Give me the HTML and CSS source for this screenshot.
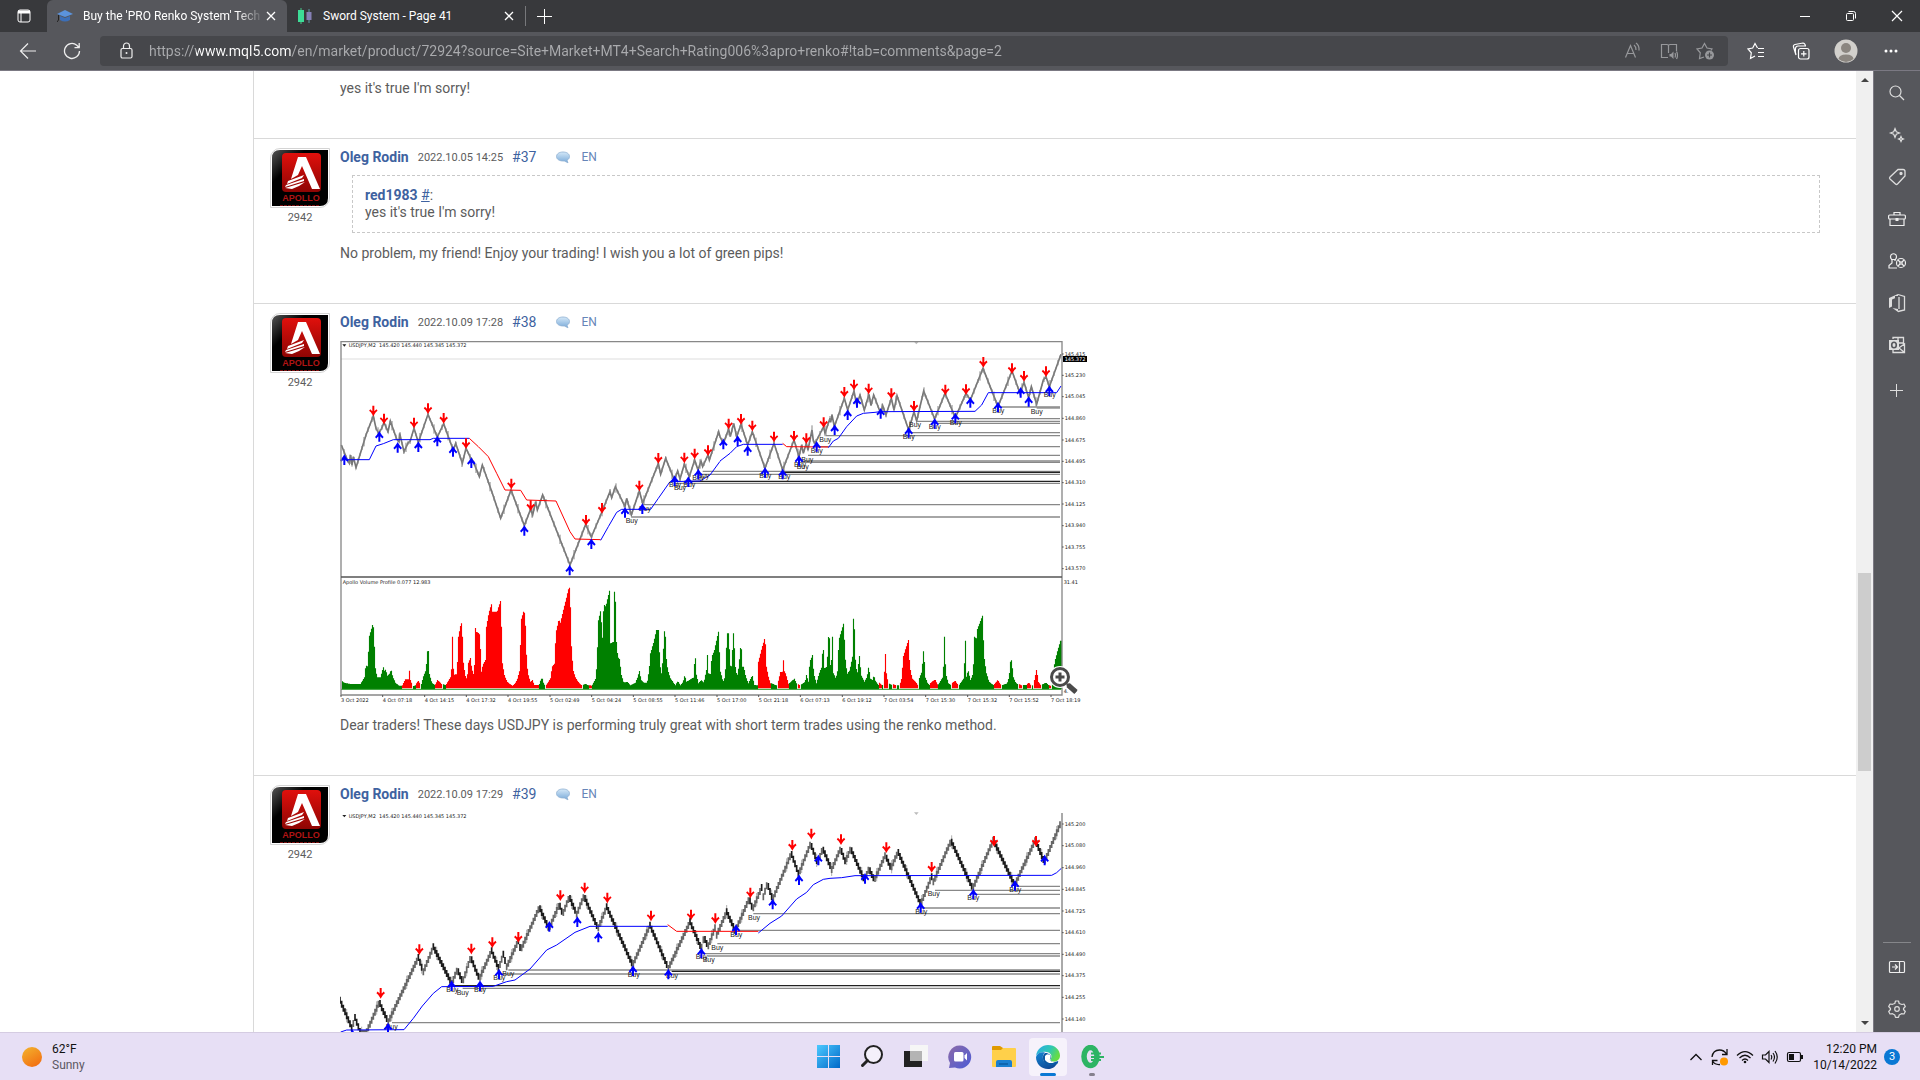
FILE: index.html
```
<!DOCTYPE html>
<html lang="en">

<head>
   <meta charset="UTF-8">
   <meta name="viewport" content="width=device-width, initial-scale=1.0">
   <title>Buy the 'PRO Renko System' Technical Indicator</title>
   <link rel="stylesheet" href="styles.css">
</head>

<body>
   <!-- shared drawings -->
   <svg class="defs" width="0" height="0" aria-hidden="true">
      <defs>
         <linearGradient id="apollo-black" x1="0" y1="0" x2="1" y2="1">
            <stop offset="0" stop-color="#555" />
            <stop offset=".3" stop-color="#000" />
         </linearGradient>
         <linearGradient id="apollo-red" x1="0" y1="0" x2="0" y2="1">
            <stop offset="0" stop-color="#e0100c" />
            <stop offset="1" stop-color="#8e0503" />
         </linearGradient>
         <linearGradient id="bubble-blue" x1="0" y1="0" x2="0" y2="1">
            <stop offset="0" stop-color="#d4e8f8" />
            <stop offset="1" stop-color="#78a9d8" />
         </linearGradient>
         <symbol id="avatar" viewBox="0 0 56 56">
            <path d="M8 0H56V48Q56 56 48 56H0V8Q0 0 8 0Z" fill="url(#apollo-black)" />
            <rect x="10" y="3" width="39" height="39" rx="4" fill="url(#apollo-red)" />
            <path d="M26 7H34L48 39H40L30 16L26 25L19 29Z" fill="#fff" />
            <path d="M16 31L32 25L30 28L15 34ZM14 35L32 29L32 31L13 37ZM13 38L33 32L27 36L20 39Z" fill="#fff" />
            <text x="29" y="51" class="avatar-name">APOLLO</text>
            <path d="M8 55.500H48" stroke="#7a1010" stroke-dasharray="3 1" />
         </symbol>
         <symbol id="bubble" viewBox="0 0 14 14">
            <path d="M7 2C11 2 13.500 4 13.500 6.500C13.500 8.300 12.500 9.500 11 10.200L12 12.800L8.300 11C3.500 11.300 .5 9.300 .5 6.500C.5 4 3 2 7 2Z" fill="url(#bubble-blue)" stroke="#8fb0d2" stroke-width=".8" />
         </symbol>
         <g id="arrow-down">
            <path d="M0-14V9M-11-1Q-5 3 0 12Q5 3 11-1" fill="none" stroke="#f00" stroke-width="6" />
         </g>
         <g id="arrow-up">
            <path d="M0 15V-8M-11 3Q-5-2 0-11Q5-2 11 3" fill="none" stroke="#00f" stroke-width="6" />
         </g>
      </defs>
   </svg>

   <header class="tab-bar">
      <button class="tab-menu" aria-label="Tab actions">
         <svg width="16" height="16" viewBox="0 0 16 16" fill="none" stroke="#fff"><rect x="2" y="2" width="12" height="12" rx="2" /><path d="M2 4H14" stroke-width="3" /><path d="M5 5V14" /></svg>
      </button>
      <div class="tab active">
         <svg class="favicon" width="16" height="16" viewBox="0 0 16 16"><path d="M0 6L8 2L16 6L8 9Z" fill="#5b93dc" /><path d="M3 8V12Q8 15 13 12V8L8 10Z" fill="#3c6fb8" /><path d="M1.500 7V12L0 14" stroke="#222" fill="none" /></svg>
         <span class="tab-title">Buy the 'PRO Renko System' Tech</span>
         <button class="tab-close" aria-label="Close tab"><svg width="10" height="10" viewBox="0 0 10 10" stroke="#fff" stroke-width="1.300"><path d="M1 1L9 9M9 1L1 9" /></svg></button>
      </div>
      <div class="tab">
         <svg class="favicon" width="16" height="16" viewBox="0 0 16 16"><path d="M4 0V16M12 1V15" stroke="#4c8" /><rect x="1" y="2" width="6" height="12" fill="#3ddc97" /><path d="M12 1V15" stroke="#55507c" /><rect x="9.500" y="4" width="5" height="8" fill="#8580b5" /></svg>
         <span class="tab-title">Sword System - Page 41</span>
         <button class="tab-close" aria-label="Close tab"><svg width="10" height="10" viewBox="0 0 10 10" stroke="#fff" stroke-width="1.300"><path d="M1 1L9 9M9 1L1 9" /></svg></button>
      </div>
      <button class="new-tab" aria-label="New tab"><svg width="16" height="16" viewBox="0 0 16 16" stroke="#fff"><path d="M8.500 1V16M1 8.500H16" /></svg></button>
      <div class="window-buttons">
         <button aria-label="Minimize"><svg width="12" height="12" viewBox="0 0 12 12" stroke="#fff"><path d="M1 6.500H11" /></svg></button>
         <button aria-label="Restore"><svg width="12" height="12" viewBox="0 0 12 12" stroke="#fff" fill="none"><rect x="1.500" y="3.500" width="7" height="7" rx="1" /><path d="M3.500 1.500H8.500Q10.500 1.500 10.500 3.500V8.500" /></svg></button>
         <button aria-label="Close"><svg width="12" height="12" viewBox="0 0 12 12" stroke="#fff" stroke-width="1.200"><path d="M1 1L11 11M11 1L1 11" /></svg></button>
      </div>
   </header>

   <nav class="toolbar">
      <button class="nav-btn" aria-label="Back"><svg width="18" height="18" viewBox="0 0 18 18" fill="none" stroke="#eee" stroke-width="1.200"><path d="M17 9H2M9 1.500L1.500 9L9 16.500" /></svg></button>
      <button class="nav-btn" aria-label="Refresh"><svg width="18" height="18" viewBox="0 0 18 18" fill="none" stroke="#eee" stroke-width="1.300"><path d="M16.500 9A7.500 7.500 0 1 1 13.800 3.200L16 5.500M16.200 1V5.700H11.500" /></svg></button>
      <div class="address">
         <svg width="14" height="18" viewBox="0 0 14 18" fill="none" stroke="#eee" stroke-width="1.200"><rect x="2" y="6.500" width="11" height="9.500" rx="1.500" /><path d="M4.500 6.500V4A3 3 0 0 1 10.500 4V6.500" /><circle cx="7.500" cy="11" r="1" fill="#eee" stroke="none" /></svg>
         <input type="text" class="url" aria-label="Address" value="https://www.mql5.com/en/market/product/72924?source=Site+Market+MT4+Search+Rating006%3apro+renko#!tab=comments&amp;page=2">
         <div class="address-actions">
            <button aria-label="Read aloud"><svg width="18" height="18" viewBox="0 0 18 18" fill="none" stroke="#97989b" stroke-width="1.200"><path d="M1.500 15.500L6.500 3.500L11.500 15.500M3.300 11.500H9.700M10 3Q12 4.500 12 8M12 1Q15.500 3.500 15 8.500" /></svg></button>
            <button aria-label="Immersive reader"><svg width="18" height="18" viewBox="0 0 18 18" fill="none" stroke="#97989b" stroke-width="1.200"><path d="M8 15.500H1.500V2.500H7Q8.500 2.500 8.500 4V11M8.500 4Q8.500 2.500 10 2.500H16.500V9" /><path d="M9.500 12H11L13.500 9.500V17L11 14.500H9.500Z" fill="#97989b" stroke="none" /><path d="M15 11Q16 13 15 15.500M16.500 9.500Q18.500 13 16.500 17" /></svg></button>
            <button aria-label="Add to favorites"><svg width="18" height="18" viewBox="0 0 18 18" fill="none" stroke="#97989b" stroke-width="1.200"><path d="M8 15L3.500 16.500L4.300 10.800L1 7L6 6L8.500 1.500L11 6L16 7L15 8.500" /><circle cx="13.500" cy="13" r="4.500" fill="#97989b" stroke="none" /><path d="M13.500 10.500V15.500M11 13H16" stroke="#46474b" /></svg></button>
         </div>
      </div>
      <div class="toolbar-actions">
         <button aria-label="Favorites"><svg width="18" height="18" viewBox="0 0 18 18" fill="none" stroke="#fff" stroke-width="1.200"><path d="M10.500 6L8 1.500L5.700 6L1 7L4.300 10.800L3.500 16.500L8 14M11 6.500H17M11 10.500H17M11 14.500H17" /></svg></button>
         <button aria-label="Collections"><svg width="18" height="18" viewBox="0 0 18 18" fill="none" stroke="#fff" stroke-width="1.200"><rect x="6.500" y="6.500" width="10.500" height="10.500" rx="2" /><path d="M11.800 9V14.500M9 11.800H14.500M4 13L1.500 5Q1 3 3 2.500L11 1Q13 1 13.500 4M4 13Q3 10 3.500 6Q4 4 6 4H14" /></svg></button>
         <button aria-label="Profile"><svg width="24" height="24" viewBox="0 0 24 24"><circle cx="12" cy="12" r="11.500" fill="#d2d0cc" /><circle cx="12" cy="9" r="5" fill="#8b8680" /><path d="M4.500 20Q5 15.500 12 15.500Q19 15.500 19.500 20Q12 26 4.500 20Z" fill="#8b8680" /></svg></button>
         <button aria-label="Settings and more"><svg width="16" height="16" viewBox="0 0 16 16" fill="#fff"><circle cx="3" cy="8" r="1.500" /><circle cx="8" cy="8" r="1.500" /><circle cx="13" cy="8" r="1.500" /></svg></button>
      </div>
   </nav>

   <div class="window">
      <main class="page">
         <article class="post">
            <div class="post-body">
               <p>yes it's true I'm sorry!</p>
            </div>
         </article>

         <article class="post">
            <div class="author">
               <a href="#" class="avatar"><svg width="56" height="56"><use href="#avatar" /></svg></a>
               <span class="rating">2942</span>
            </div>
            <div class="post-body">
               <div class="post-head">
                  <a href="#" class="name">Oleg Rodin</a>
                  <time>2022.10.05 14:25</time>
                  <a href="#">#37</a>
                  <svg class="bubble" width="14" height="14"><use href="#bubble" /></svg>
                  <a href="#" class="lang">EN</a>
               </div>
               <blockquote>
                  <div><a href="#" class="name">red1983</a> <a href="#" class="ref">#</a>:</div>
                  <div>yes it's true I'm sorry!</div>
               </blockquote>
               <p>No problem, my friend! Enjoy your trading! I wish you a lot of green pips!</p>
            </div>
         </article>

         <article class="post">
            <div class="author">
               <a href="#" class="avatar"><svg width="56" height="56"><use href="#avatar" /></svg></a>
               <span class="rating">2942</span>
            </div>
            <div class="post-body">
               <div class="post-head">
                  <a href="#" class="name">Oleg Rodin</a>
                  <time>2022.10.09 17:28</time>
                  <a href="#">#38</a>
                  <svg class="bubble" width="14" height="14"><use href="#bubble" /></svg>
                  <a href="#" class="lang">EN</a>
               </div>
               <figure>
                  <svg class="chart" id="chart-volume" viewBox="0 0 2244 1095"></svg>
                  <svg class="magnifier" width="32" height="32" viewBox="0 0 32 32" fill="none"><circle cx="12" cy="14" r="11" fill="#fff" /><path d="M18 20L29 30" stroke="#fff" stroke-width="7" /><circle cx="12" cy="14" r="8.500" stroke="#4a4a4a" stroke-width="3" /><path d="M12 9.500V18.500M7.500 14H16.500M19 21L28 29" stroke="#4a4a4a" stroke-width="3" /><path d="M20 22L28 29" stroke="#4a4a4a" stroke-width="5" /></svg>
               </figure>
               <p>Dear traders! These days USDJPY is performing truly great with short term trades using the renko method.</p>
            </div>
         </article>

         <article class="post">
            <div class="author">
               <a href="#" class="avatar"><svg width="56" height="56"><use href="#avatar" /></svg></a>
               <span class="rating">2942</span>
            </div>
            <div class="post-body">
               <div class="post-head">
                  <a href="#" class="name">Oleg Rodin</a>
                  <time>2022.10.09 17:29</time>
                  <a href="#">#39</a>
                  <svg class="bubble" width="14" height="14"><use href="#bubble" /></svg>
                  <a href="#" class="lang">EN</a>
               </div>
               <figure>
                  <svg class="chart" id="chart-renko" viewBox="0 0 2244 1095"></svg>
               </figure>
            </div>
         </article>
      </main>

      <div class="scrollbar">
         <svg width="8" height="6" viewBox="0 0 8 6"><path d="M0 5L4 1L8 5Z" fill="#444" /></svg>
         <div class="track"><div class="thumb"></div></div>
         <svg width="8" height="6" viewBox="0 0 8 6"><path d="M0 1L4 5L8 1Z" fill="#444" /></svg>
      </div>

      <aside class="sidebar">
         <button aria-label="Search"><svg width="18" height="18" viewBox="0 0 18 18" fill="none" stroke="#ddd" stroke-width="1.200"><circle cx="7.500" cy="7.500" r="5.500" /><path d="M11.500 11.500L16 16" /></svg></button>
         <button aria-label="Discover"><svg width="18" height="18" viewBox="0 0 18 18" fill="none" stroke="#ddd" stroke-width="1.200"><path d="M7 2.500L8.300 5.700L11.500 7L8.300 8.300L7 11.500L5.700 8.300L2.500 7L5.700 5.700ZM13 10.500L13.800 12.200L15.500 13L13.800 13.800L13 15.500L12.200 13.800L10.500 13L12.200 12.200Z" /></svg></button>
         <button aria-label="Shopping"><svg width="18" height="18" viewBox="0 0 18 18" fill="none" stroke="#ddd" stroke-width="1.300"><path d="M10 1.500H15Q17 1.500 17 3.500V8L9.500 16Q8.500 17 7.500 16L2 11Q1 10 2 9Z" /><circle cx="13" cy="5.500" r="1" fill="#ddd" /></svg></button>
         <button aria-label="Tools"><svg width="18" height="18" viewBox="0 0 18 18" fill="none" stroke="#eee" stroke-width="1.200"><rect x=".6" y="5" width="16.800" height="4" rx="1" /><path d="M2 9V15.500H16V9M6 5V2.500H12V5" /><path d="M7.500 9.500H10.500" stroke-width="3" /></svg></button>
         <button aria-label="Games"><svg width="18" height="18" viewBox="0 0 18 18" fill="none" stroke="#eee" stroke-width="1.200"><path d="M3 7.500H8M3.500 7A3 3 0 1 1 7.500 7M4 8V11L1 13.500V16H9M7 8V9" /><circle cx="13" cy="11" r="4.500" /><circle cx="13" cy="11" r="1.200" /><path d="M10 8L12 10M16 8L14 10M10 14L12 12M16 14L14 12" /></svg></button>
         <button aria-label="Office"><svg width="18" height="20" viewBox="0 0 18 20"><path d="M10 1L1 5V15L4 13.500V6.500L10 4ZM10 1V16L4.500 15L10 19Z" fill="#ddd" /><path d="M7 3V14.500H10V3Z" fill="#56575c" /><path d="M10 1.500L16.500 3.500V17L10 18.500M11 4V16" fill="none" stroke="#ddd" stroke-width="1.300" /></svg></button>
         <button aria-label="Outlook"><svg width="18" height="18" viewBox="0 0 18 18" fill="none" stroke="#ddd" stroke-width="1.300"><path d="M5 3V1.500H15.500V8M5 14V16.500H16.500V8L10 12.500M11 12L16 16M10 1.500V7H15" /><rect x="1" y="4" width="10" height="10" fill="#ddd" stroke="none" /><ellipse cx="6" cy="9" rx="2.300" ry="2.800" stroke="#56575c" stroke-width="1.600" /></svg></button>
         <button class="add" aria-label="Add"><svg width="14" height="14" viewBox="0 0 14 14" stroke="#ddd"><path d="M6.500 0V13M0 6.500H13" /></svg></button>
         <hr>
         <button aria-label="Hide sidebar"><svg width="18" height="18" viewBox="0 0 18 18" fill="none" stroke="#eee" stroke-width="1.200"><rect x="1.500" y="3.500" width="15" height="11" rx="1" /><path d="M11.500 3.500V14.500M4 9H9M7 6.500L9.500 9L7 11.500" /></svg></button>
         <button aria-label="Settings"><svg width="18" height="18" viewBox="0 0 18 18" fill="none" stroke="#ddd" stroke-width="1.200"><path d="M7.500 1H10.500L11.200 3.500L14 4.500L16 4L17.300 6.500L15.500 8.500V9.500L17.300 11.500L16 14L13.500 13.700L11.200 15L10.500 17.300H7.500L6.800 15L4.500 13.700L2 14L.7 11.500L2.500 9.500V8.500L.7 6.500L2 4L4.500 4.300L6.800 3.500Z" stroke-linejoin="round" /><circle cx="9" cy="9" r="2.300" /></svg></button>
      </aside>
   </div>

   <footer class="taskbar">
      <div class="weather">
         <span class="sun"></span>
         <div><div>62°F</div><div class="muted">Sunny</div></div>
      </div>

      <div class="apps">
         <button aria-label="Start"><svg width="24" height="24" viewBox="0 0 24 24"><defs><linearGradient id="win" x2="1" y2="1"><stop stop-color="#4cc9ff" /><stop offset="1" stop-color="#0068c8" /></linearGradient></defs><path d="M1 0H12V11H1ZM13 0H24V11H13ZM1 12H12V23H1ZM13 12H24V23H13Z" fill="url(#win)" /></svg></button>
         <button aria-label="Search"><svg width="24" height="24" viewBox="0 0 24 24" fill="none" stroke="#222"><circle cx="13.500" cy="9.500" r="8.500" fill="#f4f0fa" stroke-width="2" /><path d="M7.500 15.500L2.500 20.500" stroke-width="3" stroke-linecap="round" /></svg></button>
         <button aria-label="Task view"><svg width="24" height="24" viewBox="0 0 24 24"><rect x="0" y="6" width="18" height="16" fill="#222" /><rect x="6" y="0" width="18" height="16" fill="#f6f6f6" /><rect x="6" y="6" width="12" height="10" fill="#b4b4b4" /></svg></button>
         <button aria-label="Chat"><svg width="24" height="24" viewBox="0 0 24 24"><defs><linearGradient id="chat" x2="1" y2="1"><stop stop-color="#8d6ba8" /><stop offset="1" stop-color="#4b5bd6" /></linearGradient></defs><path d="M12 .5A11.500 11.500 0 1 1 7 22.500L1 23L2 18A11.500 11.500 0 0 1 12 .5Z" fill="url(#chat)" /><rect x="6" y="7" width="9.500" height="9.500" rx="1.500" fill="#fff" /><path d="M16.500 10.500L19 8V15.500L16.500 13Z" fill="#fff" /></svg></button>
         <button aria-label="File Explorer"><svg width="24" height="24" viewBox="0 0 24 24"><path d="M0 2Q0 1 1 1H8L11 3V8H0Z" fill="#e09a00" /><path d="M0 5H9L11 3H23Q24 3 24 4V21Q24 22 23 22H1Q0 22 0 21Z" fill="#ffd04a" /><path d="M4 22V17Q4 15 6 15H18Q20 15 20 17V22Z" fill="#1a7fd0" /><path d="M7 19H16" stroke="#0b5ca4" stroke-width="1.500" /></svg></button>
         <button class="running" aria-label="Microsoft Edge"><svg width="24" height="24" viewBox="0 0 24 24"><defs><linearGradient id="edge-top" x2="1" y2=".4"><stop stop-color="#2aa9e8" /><stop offset=".6" stop-color="#2fc7b4" /><stop offset="1" stop-color="#66dc45" /></linearGradient><linearGradient id="edge-low" x2=".6" y2="1"><stop stop-color="#1385d4" /><stop offset="1" stop-color="#104a96" /></linearGradient></defs><path d="M0 11C1 4 6 0 12 0C19 0 24 5 24 10.500C24 15 20 17 17 16.500C14.500 16 14 15 15 13.500C17 9 12 6 7 7C3.500 7.500 1 9 0 11Z" fill="url(#edge-top)" /><path d="M0 12C1 8 5 6.500 9 7.500C7 9 6.500 11 7 14C8 18.500 13 21 21.500 18C19 22.500 15.500 24 12 24C5 24 0 18.500 0 12Z" fill="url(#edge-low)" /><path d="M9 8C12 7.500 15.500 10 15 13L14 14.500C14.300 17 18 18 22 16C22.500 16 22 18 21.500 18.500C13 22 7.500 19 7 14C6.500 11 7.500 9 9 8Z" fill="#0c59a4" /><path d="M9 11Q11 8 14 10Q15.500 12 13.800 14.500Q15 17.500 19 17.500Q12 19.500 9 15Z" fill="#fff" /></svg></button>
         <button class="open" aria-label="Trading terminal"><svg width="24" height="24" viewBox="0 0 24 24" fill="none" stroke="#2db464"><ellipse cx="10.500" cy="11.500" rx="6.500" ry="9" stroke-width="5.500" /><path d="M11 8.500H21M11 12H24M11 15H21" stroke-width="1.800" /><path d="M16 3V20" stroke-width="2" /></svg></button>
      </div>

      <div class="tray">
         <button aria-label="Show hidden icons"><svg width="16" height="18" viewBox="0 0 16 18" fill="none" stroke="#111" stroke-width="1.300"><path d="M2.500 12L8 6.500L13.500 12" /></svg></button>
         <button aria-label="Update"><svg width="18" height="18" viewBox="0 0 18 18" fill="none" stroke="#111" stroke-width="1.300"><path d="M1 9Q2 2 8.500 2Q13 2 15.500 6M16 1V6.500H11M1.500 17V12.500H6.500M1.500 13Q4 17 9 16.500" /><circle cx="13" cy="13.500" r="4" fill="#f90" stroke="none" /></svg></button>
         <button aria-label="Wi-Fi"><svg width="18" height="18" viewBox="0 0 18 18" fill="none" stroke="#111" stroke-width="1.200"><path d="M1 7.500Q9-.5 17 7.500M3.500 10Q9 4.500 14.500 10M6 12.500Q9 9.500 12 12.500" /><circle cx="9" cy="14" r="1.300" fill="#111" stroke="none" /></svg></button>
         <button aria-label="Volume"><svg width="18" height="18" viewBox="0 0 18 18" fill="none" stroke="#111" stroke-width="1.200"><path d="M1.500 7H4.500L8 3.500V14.500L4.500 11H1.500ZM10 7Q11.500 9 10 11.500M12 5Q15 9 12 13.500M14 3Q18.500 9 14 15.500" /></svg></button>
         <button aria-label="Battery"><svg width="18" height="18" viewBox="0 0 18 18" fill="none" stroke="#111" stroke-width="1.200"><rect x="1.500" y="4.500" width="13" height="9" rx="1.500" /><rect x="3" y="6" width="5" height="6" fill="#111" stroke="none" /><path d="M16 7V11" stroke-width="2" /></svg></button>
         <div class="clock"><div>12:20 PM</div><div>10/14/2022</div></div>
         <button class="badge" aria-label="Notifications">3</button>
      </div>
   </footer>

   <script src="charts.js"></script>
</body>

</html>
```
FILE: styles.css
```
* {
   margin: 0;
   padding: 0;
   box-sizing: border-box;
}

body {
   height: 100vh;
   overflow: hidden;
   display: flex;
   flex-direction: column;
   background: #fff;
   font-family: "Segoe UI", Roboto, sans-serif;
   font-size: 12px;
}

button {
   background: none;
   border: none;
   color: inherit;
   font: inherit;
   display: flex;
   align-items: center;
   justify-content: center;
   cursor: pointer;
}

svg {
   display: block;
   flex: none;
}

.defs {
   position: absolute;
}

/* tabs */
.tab-bar {
   display: flex;
   align-items: center;
   height: 32px;
   background: #38393c;
   color: #fff;
   flex: none;
}

.tab-menu {
   width: 47px;
   height: 32px;
}

.tab {
   display: flex;
   align-items: center;
   width: 239px;
   height: 32px;
   padding: 0 9px 0 10px;
   border-right: 1px solid #77787b;
   border-image: linear-gradient(transparent 20%, #77787b 20%, #77787b 80%, transparent 80%) 1;
}

.tab.active {
   width: 240px;
   background: #56575c;
   border: none;
   border-radius: 6px 6px 0 0;
}

.tab-title {
   flex: 1;
   margin-left: 10px;
   white-space: nowrap;
   overflow: hidden;
}

.active .tab-title {
   mask-image: linear-gradient(to right, #000 85%, transparent);
}

.tab-close {
   width: 14px;
   height: 20px;
}

.new-tab {
   width: 36px;
   height: 32px;
}

.window-buttons {
   display: flex;
   margin-left: auto;
}

.window-buttons button {
   width: 46px;
   height: 32px;
}

/* toolbar */
.toolbar {
   display: flex;
   align-items: center;
   height: 39px;
   padding-left: 6px;
   background: #56575c;
   border-bottom: 1px solid #7b7983;
   flex: none;
}

.nav-btn {
   width: 44px;
   height: 32px;
}

.address {
   flex: 1;
   display: flex;
   align-items: center;
   gap: 16px;
   height: 30px;
   margin-left: 6px;
   padding: 0 14px 0 19px;
   background: #46474b;
   border-radius: 4px;
}

.url {
   flex: 1;
   height: 24px;
   border: none;
   outline: none;
   font: inherit;
   font-size: 14px;
   /* the host name is lighter than the rest of the address */
   background: linear-gradient(to right, #aaabae 47px, #fff 47px, #fff 143px, #aaabae 143px);
   -webkit-background-clip: text;
   background-clip: text;
   color: transparent;
}

.address-actions {
   display: flex;
   gap: 18px;
}

.toolbar-actions {
   display: flex;
   align-items: center;
   padding: 0 7px 0 5px;
}

.toolbar-actions button {
   width: 45px;
   height: 32px;
}

/* page */
.window {
   display: flex;
   flex: 1;
   min-height: 0;
}

.page {
   flex: 1;
   overflow: hidden;
   margin-left: 253px;
   border-left: 1px solid #d9d9d9;
   font-family: "Trebuchet MS", Roboto, sans-serif;
   font-size: 14px;
   line-height: 17px;
   color: #5c5c5c;
}

.post {
   display: flex;
   padding: 9px 36px 41px 16px;
}

.post + .post {
   border-top: 1px solid #d9d9d9;
}

.author {
   width: 60px;
   text-align: center;
}

.avatar {
   display: block;
   padding: 1px;
   border: 1px solid #d4d4d4;
   border-radius: 10px 0 10px 0;
}

.avatar-name {
   font: bold 9px "Liberation Sans", sans-serif;
   fill: #b01414;
   text-anchor: middle;
}

.rating {
   font-size: 11px;
}

.post-body {
   flex: 1;
   margin-left: 10px;
}

.post:first-child .post-body {
   margin-left: 70px;
}

.post-head {
   display: flex;
   align-items: center;
   height: 18px;
   margin-bottom: 9px;
}

.post a {
   color: #3e62a0;
   text-decoration: none;
}

.name {
   font-weight: bold;
}

.post .ref {
   text-decoration: underline;
}

.post-head time {
   margin: 0 9px;
   font-size: 11px;
}

.post-head .bubble {
   margin: 0 11px 0 20px;
}

.post .lang {
   font-size: 12px;
   color: #6685b8;
}

blockquote {
   margin: 0 0 12px 12px;
   padding: 11px 12px;
   border: 1px dashed #c8c8c8;
}

figure {
   position: relative;
   width: 748px;
   margin-bottom: 12px;
}

.chart {
   width: 100%;
   font-family: "DejaVu Sans", sans-serif;
   font-size: 15px;
   fill: #222;
}

.chart .buy {
   font-family: "Liberation Sans", sans-serif;
   font-size: 21px;
   text-anchor: middle;
}

.magnifier {
   position: absolute;
   right: 8px;
   bottom: 10px;
}

.scrollbar {
   display: flex;
   flex-direction: column;
   align-items: center;
   width: 17px;
   padding: 6px 0;
   background: #f0f0f0;
}

.track {
   flex: 1;
   width: 100%;
   padding: 490px 2px 0;
}

.thumb {
   height: 198px;
   background: #cdcdcd;
}

.sidebar {
   display: flex;
   flex-direction: column;
   align-items: center;
   width: 47px;
   padding: 1px 0 2px;
   background: #56575c;
   border-left: 1px solid #7b7983;
}

.sidebar button {
   width: 46px;
   height: 42px;
}

.sidebar .add {
   margin-top: 4px;
}

.sidebar hr {
   width: 28px;
   margin: auto 0 3px;
   border: none;
   border-top: 1px solid #85868a;
}

/* taskbar */
.taskbar {
   display: grid;
   grid-template-columns: 1fr auto 1fr;
   align-items: center;
   height: 48px;
   flex: none;
   background: #e7dff5;
   border-top: 1px solid #d5cce2;
   line-height: 16px;
   color: #111;
}

.weather {
   display: flex;
   align-items: center;
   gap: 10px;
   padding-left: 22px;
}

.sun {
   width: 20px;
   height: 20px;
   border-radius: 50%;
   background: linear-gradient(150deg, #f3b52f, #f2660e);
}

.muted {
   color: #5b5763;
}

.apps {
   display: flex;
   gap: 6px;
}

.apps button {
   position: relative;
   width: 38px;
   height: 38px;
   border-radius: 4px;
}

.apps .running {
   background: #f6f2fb;
}

.running::after,
.open::after {
   content: "";
   position: absolute;
   bottom: 0;
   width: 6px;
   height: 3px;
   border-radius: 2px;
   background: #85808d;
}

.running::after {
   width: 16px;
   background: #0a78d4;
}

.tray {
   display: flex;
   align-items: center;
   justify-content: flex-end;
   gap: 7px;
   padding-right: 20px;
}

.clock {
   min-width: 66px;
   text-align: right;
}

.badge {
   width: 16px;
   height: 16px;
   border-radius: 50%;
   background: #0a78d4;
   color: #fff;
   font-size: 11px;
}
```
FILE: charts.js
```
// Charts are drawn in thirds of a pixel. Each one comes in two halves, "at" is the offset of a half.
const RIGHT_EDGE = 2163;

const volumeChart = {
   halves: [
      {
         at: [-30, -15],
         price: '34,330 46,360 52,375 58,385 62,360 66,390 70,365 78,398 108,300 130,243 138,280 146,295 155,280 162,262 174,290 181,258 200,312 207,320 209,295 222,350 235,322 240,320 252,280 265,322 294,238 322,306 341,266 355,305 370,345 377,325 397,385 408,340 420,365 430,380 448,425 457,390 487,475 512,550 543,465 583,572 602,522 608,540 617,500 622,525 638,480 720,690 767,568 784,606 812,540 840,470 845,488 856,455 885,515 890,490 904,540 928,468 938,505 985,385 992,418 1007,370 1033,435 1043,408 1050,432 1063,388 1078,425 1094,375 1104,405 1113,378 1118,395 1134,360 1138,375 1166,290 1170,305',
         trend: [
            ['#00f', '34,374 118,374 138,333 160,326 190,314 300,314 310,310 418,310'],
            ['#f00', '418,310 445,335 475,365 500,415 525,465 572,466 590,495 678,498 720,590 735,612 812,614'],
            ['#00f', '812,616 835,575 860,532 875,523 962,523 985,490 1020,440 1110,438 1140,420 1170,379']
         ],
         sell: '130,226 162,250 252,262 294,219 341,248 408,324 544,445 602,510 768,554 816,518 928,451 985,368 1063,367 1094,355 1134,345',
         buy: '43,375 148,305 203,338 265,336 322,319 369,350 424,384 583,587 784,627 719,706 885,533 937,522 1034,438 1075,441 1105,418',
         labels: '905,557 945,522 1035,450 1050,457 1078,450 1105,428 1120,422',
         levels: '904,546 938,509 1033,445 1104,418 1118,409',
         strong: '1063,439'
      },
      {
         at: [1140, -15],
         price: '0,305 10,325 26,282 31,305 41,265 50,305 63,268 83,330 97,290 135,400 162,325 188,405 222,315 237,365 245,330 250,355 259,325 264,345 276,285 280,318 285,325 311,275 315,295 330,250 332,262 336,240 343,275 373,190 383,225 402,168 410,210 420,180 433,225 447,178 453,212 461,180 482,235 488,212 498,240 514,190 522,225 531,182 566,285 582,230 590,258 611,168 644,252 675,175 706,248 738,175 751,195 789,100 834,215 876,108 900,175 912,142 926,188 934,155 950,208 970,135 978,125 988,155 1023,58',
         trend: [
            ['#00f', '0,378 30,355 50,335 70,328 188,328'],
            ['#f00', '188,325 200,335 325,336'],
            ['#00f', '325,338 340,318 355,310 380,275 410,243 430,235 465,232 480,230 765,229 785,210 805,173 1010,173 1023,153']
         ],
         sell: '26,265 63,251 97,271 162,304 222,302 259,309 311,261 373,170 402,148 446,160 514,174 582,212 676,163 738,162 790,80 876,99 912,122 978,108',
         buy: '10,328 53,318 83,347 135,413 188,418 237,377 290,335 344,285 383,240 411,203 482,236 566,293 644,266 706,250 751,203 834,217 902,173 926,200 988,168',
         labels: '136,423 193,424 240,389 248,395 262,373 290,346 316,313 566,304 585,270 644,276 707,262 835,228 950,231 989,178',
         levels: '237,382 250,378 264,361 290,335 316,302 566,293 644,265 590,259 706,251 834,216 950,219',
         strong: '188,412'
      }
   ],
   prices: [
      ['145.415', 57], ['145.230', 121], ['145.045', 185], ['144.860', 250], ['144.675', 315], ['144.495', 379],
      ['144.310', 443], ['144.125', 507], ['143.940', 572], ['143.755', 636], ['143.570', 701]
   ],
   times: ['3 Oct 2022', '4 Oct 07:18', '4 Oct 14:15', '4 Oct 17:32', '4 Oct 19:55', '5 Oct 02:49', '5 Oct 04:24', '5 Oct 08:55', '5 Oct 11:46', '5 Oct 17:00', '5 Oct 21:18', '6 Oct 07:13', '6 Oct 19:12', '7 Oct 03:54', '7 Oct 15:30', '7 Oct 15:32', '7 Oct 15:52', '7 Oct 18:19'],
   // g = rising volume, r = falling volume
   volume: [
      {
         at: [-30, 690],
         data: 'g 34,332 40,338 60,342 90,342 102,322 106,286 112,290 116,200 122,180 128,158 131,200 134,290 140,322 150,322 156,300 159,292 163,305 166,296 170,318 178,310 182,298 187,320 195,338 205,347 215,347 r 216,346 224,328 234,328 237,302 240,330 246,346 g 247,348 256,346 r 258,340 263,332 270,342 g 273,342 280,315 287,300 290,245 295,242 297,312 304,338 314,346 r 315,343 321,330 330,338 336,345 g 337,342 346,345 r 348,342 360,322 364,290 366,200 368,290 372,314 380,312 383,205 392,158 395,165 398,270 404,315 410,330 413,280 420,264 424,295 430,315 433,270 434,168 437,185 446,190 449,200 452,310 457,285 465,270 468,170 476,125 483,103 486,125 500,125 510,93 513,170 516,280 522,315 530,335 545,347 550,345 560,330 568,300 572,150 579,125 584,130 587,240 592,310 600,335 606,330 612,345 625,345 g 626,345 632,326 636,326 640,342 645,346 r 647,346 660,325 665,290 673,280 676,190 685,148 690,158 700,115 716,50 719,60 722,215 728,300 735,322 745,338 755,347 g 757,345 766,342 775,347 r 777,346 785,347 g 786,344 796,325 800,270 803,155 812,115 815,240 818,130 822,105 826,110 837,62 840,220 850,215 852,65 854,40 857,205 862,260 868,268 872,312 880,338 890,335 900,346 915,338 922,320 927,303 932,330 940,338 950,338 956,300 960,250 970,215 978,180 985,180 988,280 993,310 997,270 1004,150 1006,250 1012,300 1020,325 1035,346 1042,333 1050,346 1058,335 1063,315 1068,335 1080,328 1090,322 1094,242 1097,310 1104,340 1112,330 1120,338 1128,300 1131,255 1134,310 1140,312 1144,260 1152,240 1165,180 1168,280 1170,305'
      },
      {
         at: [1140, 690],
         data: 'g 0,305 8,335 14,320 20,190 26,190 28,285 34,290 38,190 41,190 43,280 50,320 55,290 62,212 65,290 70,290 76,320 84,340 92,322 96,318 102,345 112,346 r 114,275 124,235 134,200 138,290 145,325 152,346 g 153,340 170,347 r 172,340 180,306 186,305 188,242 190,300 196,312 205,345 g 206,340 222,326 230,345 r 232,342 240,346 g 241,345 254,335 258,315 264,335 268,275 276,255 280,310 288,340 296,310 304,290 308,212 311,295 320,290 323,200 327,205 329,290 333,270 336,200 339,310 346,325 352,300 355,210 370,158 374,260 380,312 388,300 396,260 398,150 401,137 404,260 410,315 417,258 422,315 432,335 440,320 445,286 449,325 456,330 460,316 466,335 475,346 r 477,338 484,345 g 485,345 489,345 r 490,340 495,252 498,310 504,345 g 505,340 516,346 r 517,342 528,346 g 529,346 536,346 r 538,345 545,320 547,265 556,235 564,210 568,290 575,325 585,335 592,345 g 595,330 604,305 610,232 614,320 622,340 628,346 r 629,340 644,328 652,345 g 653,345 668,320 672,200 676,310 684,340 693,346 r 694,340 704,332 714,346 g 716,345 730,325 735,212 738,320 743,300 750,330 758,310 762,200 768,205 770,180 786,137 791,260 798,310 806,335 820,346 r 822,342 832,330 842,346 g 844,346 860,340 866,320 870,275 874,270 878,320 886,338 894,345 r 896,342 905,347 g 907,345 919,345 r 920,342 925,338 932,346 g 934,346 938,346 r 940,340 949,295 953,335 962,346 g 964,344 977,338 985,346 r 986,346 993,347 g 994,340 1000,300 1003,275 1012,240 1020,212 1024,212'
      }
   ]
};

const renkoChart = {
   halves: [
      {
         at: [-240, -126],
         price: '240,690 276,775 285,742 302,790 318,790 358,695 368,720 385,755 475,562 490,605 520,530 575,640 592,598 608,635 632,562 658,625 695,542 716,595 730,552 740,590 775,512 782,540 838,412 867,475 898,402 908,432 928,380 950,432 972,378 1014,475 1040,410 1118,585 1170,465 1225,595 1290,455',
         trend: [
            ['#00f', '242,786 260,780 432,779 460,745 487,708 520,670 545,650 700,649 740,635 765,630 810,597 860,540 890,525 945,487 990,469 1223,469'],
            ['#f00', '1223,464 1250,484 1290,484']
         ],
         sell: '362,668 478,537 634,535 697,516 775,500 901,375 974,352 1042,382 1173,436 1293,433',
         buy: '277,795 384,775 575,648 660,648 717,613 868,470 952,456 1015,502 1119,603 1225,613',
         labels: '395,771 577,658 608,667 660,659 718,624 745,611 1121,615 1236,618',
         levels: '396,758 608,655 720,612 745,600',
         strong: '575,647 1235,604'
      },
      {
         at: [1050, -36],
         price: '0,365 34,445 42,410 54,440 76,380 80,405 110,335 136,392 178,295 188,328 215,262 220,290 232,250 248,298 304,160 326,222 362,130 383,190 398,145 425,208 452,145 466,185 482,145 523,240 537,205 553,240 586,165 603,205 624,155 692,312 725,230 728,250 783,122 848,265 910,120 974,255 1036,120 1063,185 1114,65',
         trend: [
            ['#f00', '0,394 205,394'],
            ['#00f', '205,399 240,370 275,348 320,297 350,277 370,254 400,238 420,235 455,233 495,227 1085,226 1100,218 1114,205']
         ],
         sell: '76,354 181,277 307,134 364,100 453,117 589,141 725,200 912,122 1038,122',
         buy: '34,460 138,390 248,313 327,240 385,181 525,236 692,323 850,283 975,257 1064,181',
         labels: '35,471 56,479 82,442 139,403 192,353 694,335 731,282 850,293 976,270',
         levels: '54,468 34,461 82,431 150,391 190,341 692,324 850,283 735,271 975,259',
         strong: ''
      }
   ],
   prices: [
      ['145.200', 72], ['145.080', 137], ['144.960', 203], ['144.845', 268], ['144.725', 333],
      ['144.610', 398], ['144.490', 463], ['144.375', 527], ['144.255', 592], ['144.140', 657]
   ]
};

function points(text, at) {
   if (!text) return [];
   return text.split(' ').map((pair) => {
      const [x, y] = pair.split(',').map(Number);
      return [x + at[0], y + at[1]];
   });
}

function line(list, color, width) {
   return `<polyline points="${list.join(' ')}" fill="none" stroke="${color}" stroke-width="${width}"/>`;
}

function hline(x1, x2, y, color, width) {
   return `<path d="M${x1} ${y}H${x2}" stroke="${color}" stroke-width="${width}"/>`;
}

// height of the curve between two points, one step every few units
function walk(list, step, draw) {
   for (let i = 0; i < list.length - 1; i++) {
      const [x1, y1] = list[i];
      const [x2, y2] = list[i + 1];
      for (let x = Math.ceil(x1 / step) * step; x < x2; x += step) {
         draw(x, y1 + (y2 - y1) * (x - x1) / (x2 - x1), y2 > y1);
      }
   }
}

function drawWicks(list) {
   let d = '';
   let n = 0;
   walk(list, 6, (x, y) => {
      const size = [3, 8, 4, 6, 14, 5, 7][n++ % 7];
      d += `M${x} ${Math.round(y - size)}v${size * 2}`;
   });
   return line(list, '#757575', 5) + `<path d="${d}" stroke="#858585" stroke-width="3"/>`;
}

function drawBricks(list) {
   const d = { up: '', down: '', wick: '' };
   let n = 0;
   walk(list, 5, (x, y, falling) => {
      d[falling ? 'down' : 'up'] += `M${x} ${Math.round(y - 10)}v21`;
      if (n++ % 9 === 4) d.wick += `M${x} ${Math.round(y - 20)}v40`;
   });
   return `<path d="${d.wick}" stroke="#888" stroke-width="2"/>` +
      `<path d="${d.up}" stroke="#666" stroke-width="5"/>` +
      `<path d="${d.down}" stroke="#1c1c1c" stroke-width="5"/>`;
}

function drawHalf(half, drawPrice) {
   let out = drawPrice(points(half.price, half.at));
   points(half.levels, half.at).forEach(([x, y]) => out += hline(x, RIGHT_EDGE - 3, y, '#888', 4));
   points(half.strong, half.at).forEach(([x, y]) => out += hline(x, RIGHT_EDGE - 3, y, '#222', 4));
   half.trend.forEach(([color, text]) => out += line(points(text, half.at), color, 3));
   points(half.labels, half.at).forEach(([x, y]) => out += `<text class="buy" x="${x}" y="${y + 7}">Buy</text>`);
   points(half.sell, half.at).forEach(([x, y]) => out += `<use href="#arrow-down" x="${x}" y="${y}"/>`);
   points(half.buy, half.at).forEach(([x, y]) => out += `<use href="#arrow-up" x="${x}" y="${y}"/>`);
   return out;
}

function drawPrices(prices, offset) {
   return prices.map(([text, y]) =>
      hline(2166, 2171, y + offset, '#555', 3) + `<text x="2174" y="${y + offset + 5}">${text}</text>`
   ).join('');
}

function drawVolume(part) {
   const base = part.at[1] + 358;
   let out = '';
   part.data.split(/ ?([gr]) /).slice(1).forEach((text, i, all) => {
      if (i % 2 === 0) return;
      const falling = all[i - 1] === 'r';
      let d = '';
      walk(points(text, part.at), 3, (x, y) => d += `M${x + 1.5} ${base - (falling ? 3 : 0)}V${Math.round(y)}`);
      out += `<path d="${d}" stroke="${falling ? '#f00' : '#008000'}" stroke-width="3.4"/>`;
   });
   return out;
}

function drawTitle(y) {
   return `<path d="M7 ${y - 9}h12l-6 7z"/><text x="26" y="${y}" xml:space="preserve">USDJPY,M2  145.420 145.440 145.345 145.372</text>` +
      `<path d="M1722 ${y - 17}h14l-7 8z" fill="#bbb"/>`;
}

let svg = drawTitle(22);
svg += hline(3, RIGHT_EDGE, 57, '#ddd', 3);
svg += volumeChart.halves.map((half) => drawHalf(half, drawWicks)).join('');
svg += volumeChart.volume.map(drawVolume).join('');
svg += hline(3, RIGHT_EDGE, 1048, '#2c9a2c', 3);
svg += '<path d="M3 5H2166V1065H3Z" fill="none" stroke="#888" stroke-width="4"/>';
svg += hline(3, 2166, 711, '#555', 5);
svg += drawPrices(volumeChart.prices, -15);
svg += '<rect x="2169" y="48" width="72" height="18" fill="#000"/><text x="2174" y="62" fill="#fff">145.372</text>';
svg += '<text x="8" y="733">Apollo Volume Profile 0.077 12.983</text><text x="2171" y="731">31.41</text><text x="2171" y="1060">4.</text>';
volumeChart.times.forEach((text, i) => {
   const x = Math.round(3 + i * 125.3);
   svg += `<path d="M${x} 1065v6" stroke="#555" stroke-width="3"/><text x="${x}" y="1085">${text}</text>`;
});
document.getElementById('chart-volume').innerHTML = svg;

svg = drawTitle(18);
svg += renkoChart.halves.map((half) => drawHalf(half, drawBricks)).join('');
svg += '<path d="M2166 3V1065" stroke="#555" stroke-width="3"/>';
svg += drawPrices(renkoChart.prices, -36);
document.getElementById('chart-renko').innerHTML = svg;
```
